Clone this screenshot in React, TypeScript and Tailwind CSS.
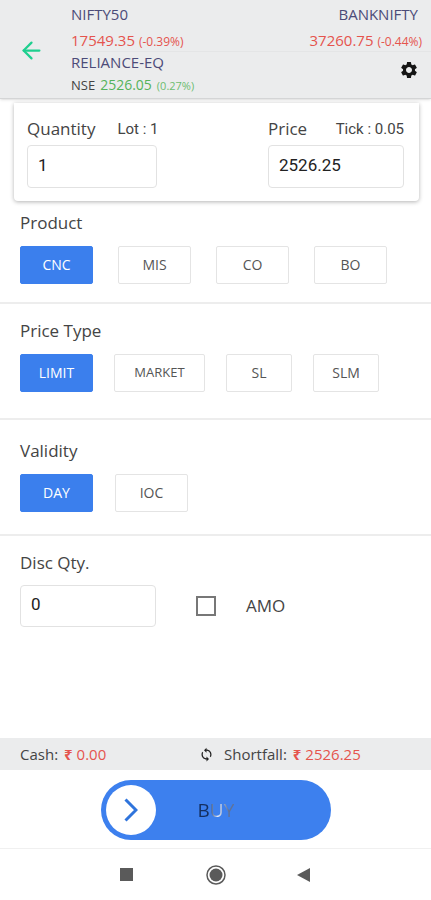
import { useState } from "react";
import { ArrowLeft } from "lucide-react";
import { MdSettings, MdSync } from "react-icons/md";

type Option = { label: string; className: string };

const products: Option[] = [
  { label: "CNC", className: "w-[73px] text-sm" },
  { label: "MIS", className: "w-[73px] text-sm" },
  { label: "CO", className: "w-[73px] text-sm" },
  { label: "BO", className: "w-[73px] text-sm" },
];

const priceTypes: Option[] = [
  { label: "LIMIT", className: "w-[73px] text-sm" },
  { label: "MARKET", className: "w-[91px] text-[13px]" },
  { label: "SL", className: "w-[66px] text-sm" },
  { label: "SLM", className: "w-[66px] text-sm" },
];

const validities: Option[] = [
  { label: "DAY", className: "w-[73px] text-sm" },
  { label: "IOC", className: "w-[73px] text-sm" },
];

type OptionGroupProps = {
  title: string;
  options: Option[];
  className: string;
  gap: string;
};

const OptionGroup = ({ title, options, className, gap }: OptionGroupProps) => {
  const [selected, setSelected] = useState(options[0].label);

  return (
    <section className={`border-b-2 border-[#ededed] px-5 ${className}`}>
      <h2 className="text-[17px] leading-6">{title}</h2>
      <div className={`mt-[11px] flex ${gap}`}>
        {options.map((option) => (
          <button
            key={option.label}
            type="button"
            aria-pressed={selected === option.label}
            onClick={() => setSelected(option.label)}
            className={`h-[38px] rounded-xs border ${option.className} ${
              selected === option.label
                ? "border-[#3b7fed] bg-[#3b7fed] text-white"
                : "border-[#e4e4e4] bg-white text-[#555]"
            }`}
          >
            {option.label}
          </button>
        ))}
      </div>
    </section>
  );
};

const Header = () => (
  <header className="flex h-[99px] shrink-0 border-b border-[#d4d5d6] bg-[#ebeced] shadow-sm">
    <button type="button" aria-label="Back" className="w-[71px] pt-[2px] pl-[18px] text-[#1fcf8f]">
      <ArrowLeft size={27} strokeWidth={2} />
    </button>
    <div className="flex-1">
      <div className="flex h-[52px] justify-between border-b border-[#e4e5e6] pt-1 pr-[9px]">
        <div>
          <div className="h-[26px] text-[15px] leading-5 text-[#4b4b78]">NIFTY50</div>
          <div className="text-[15px] leading-5 text-[#e5544d]">
            17549.35 <span className="text-xs">(-0.39%)</span>
          </div>
        </div>
        <div className="text-right">
          <div className="h-[26px] pr-1 text-[15px] leading-5 text-[#4b4b78]">BANKNIFTY</div>
          <div className="text-[15px] leading-5 text-[#e5544d]">
            37260.75 <span className="text-xs">(-0.44%)</span>
          </div>
        </div>
      </div>
      <div className="flex justify-between pr-3">
        <div>
          <div className="h-[23px] text-[15px] leading-5 text-[#4b4b78]">RELIANCE-EQ</div>
          <div className="flex items-baseline gap-[5px] leading-5">
            <span className="text-[13px] text-[#444]">NSE</span>
            <span className="text-sm text-[#55b35b]">2526.05</span>
            <span className="text-[11px] text-[#6dbd70]">(0.27%)</span>
          </div>
        </div>
        <button type="button" aria-label="Settings" className="mt-2 h-5 text-[#151515]">
          <MdSettings size={20} />
        </button>
      </div>
    </div>
  </header>
);

const App = () => {
  const [amo, setAmo] = useState(false);

  return (
    <div className="flex min-h-screen flex-col bg-white font-['Open_Sans','Noto_Sans',sans-serif] text-[#444]">
      <Header />

      <main className="flex-1">
        {/* Quantity and price */}
        <div className="mt-1 mr-3 ml-[14px] flex h-[98px] justify-between rounded-b-sm bg-white pt-[14px] pr-[15px] pl-[13px] shadow-[0_1px_4px_rgba(0,0,0,0.3)]">
          <div>
            <div className="flex h-7 items-start gap-[22px]">
              <label htmlFor="quantity" className="text-[17px] leading-6">
                Quantity
              </label>
              <span className="font-[Roboto] text-[15px] leading-6">Lot : 1</span>
            </div>
            <input
              id="quantity"
              defaultValue="1"
              className="h-[43px] w-[130px] rounded-sm border border-[#e2e2e2] px-[10px] pb-1 font-[Roboto] text-[17px] text-[#222]"
            />
          </div>
          <div className="w-[136px]">
            <div className="flex h-7 items-start justify-between">
              <label htmlFor="price" className="text-[17px] leading-6">
                Price
              </label>
              <span className="font-[Roboto] text-[15px] leading-6">Tick : 0.05</span>
            </div>
            <input
              id="price"
              defaultValue="2526.25"
              className="h-[43px] w-full rounded-sm border border-[#e2e2e2] px-[10px] pb-1 font-[Roboto] text-[17px] text-[#222]"
            />
          </div>
        </div>

        <OptionGroup title="Product" options={products} className="pt-[10px] pb-[18px]" gap="gap-[25px]" />
        <OptionGroup title="Price Type" options={priceTypes} className="pt-[15px] pb-[26px]" gap="gap-[21px]" />
        <OptionGroup title="Validity" options={validities} className="pt-[19px] pb-[22px]" gap="gap-[22px]" />

        {/* Disclosed quantity */}
        <div className="px-5 pt-[15px]">
          <label htmlFor="disc" className="block text-[17px] leading-6">
            Disc Qty.
          </label>
          <div className="mt-[10px] flex items-center">
            <input
              id="disc"
              defaultValue="0"
              className="h-[42px] w-[136px] rounded-sm border border-[#e2e2e2] px-[10px] pb-1 font-[Roboto] text-[17px] text-[#222]"
            />
            <label className="ml-10 flex items-center gap-[30px] text-[17px] leading-6">
              <input
                type="checkbox"
                checked={amo}
                onChange={(e) => setAmo(e.target.checked)}
                className="size-5 appearance-none border-2 border-[#777] checked:bg-[#3b7fed]"
              />
              AMO
            </label>
          </div>
        </div>
      </main>

      {/* Funds */}
      <div className="flex h-8 shrink-0 items-center bg-[#ebeced] px-5 text-[15px] leading-5">
        <div className="flex w-[179px] gap-[6px]">
          Cash:
          <span className="text-[#e5544d]">
            <span className="font-bold">₹</span> 0.00
          </span>
        </div>
        <button type="button" aria-label="Refresh funds" className="mr-[10px] text-[#222]">
          <MdSync size={15} />
        </button>
        <div className="flex gap-[6px]">
          Shortfall:
          <span className="text-[#e5544d]">
            <span className="font-bold">₹</span> 2526.25
          </span>
        </div>
      </div>

      <div className="flex h-[79px] shrink-0 justify-center border-b border-[#f0f0f0] pt-[10px]">
        <button type="button" className="flex h-[60px] w-[230px] items-center rounded-full bg-[#3d80ee] pl-[5px]">
          <span className="flex size-[50px] items-center justify-center rounded-full bg-white">
            <svg width="14" height="24" viewBox="0 0 14 24" fill="none" stroke="#2f74dc" strokeWidth="3">
              <path d="M1.5 1.5 L12 12 L1.5 22.5" />
            </svg>
          </span>
          <span className="ml-[42px] bg-linear-to-r from-[#142f60] from-30% via-[#e8f0ff] via-55% to-[#5f7299] to-85% bg-clip-text text-[19px] text-transparent">
            BUY
          </span>
        </button>
      </div>

      {/* System navigation */}
      <nav className="flex h-[51px] shrink-0 items-center justify-center gap-[70px] text-[#5a5a5a]">
        <button type="button" aria-label="Recent apps">
          <svg width="18" height="20" viewBox="0 0 18 20" fill="currentColor">
            <rect x="2" y="3" width="13" height="13" />
          </svg>
        </button>
        <button type="button" aria-label="Home">
          <svg width="20" height="20" viewBox="0 0 20 20" fill="currentColor">
            <circle cx="10" cy="10" r="9" fill="none" stroke="currentColor" strokeWidth="1.5" />
            <circle cx="10" cy="10" r="6.5" />
          </svg>
        </button>
        <button type="button" aria-label="Back to previous">
          <svg width="18" height="20" viewBox="0 0 18 20" fill="currentColor">
            <path d="M14 3 V17 L1 10 Z" />
          </svg>
        </button>
      </nav>
    </div>
  );
};

export default App;
